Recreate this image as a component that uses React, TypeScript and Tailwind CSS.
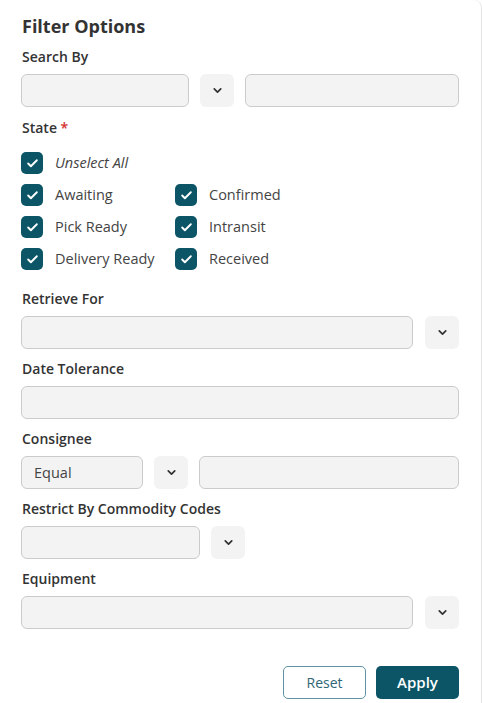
import React, { useState } from 'react';
import { ChevronDown, Check } from 'lucide-react';

const STATES = [
  { id: 'awaiting', label: 'Awaiting' },
  { id: 'confirmed', label: 'Confirmed' },
  { id: 'pickReady', label: 'Pick Ready' },
  { id: 'intransit', label: 'Intransit' },
  { id: 'deliveryReady', label: 'Delivery Ready' },
  { id: 'received', label: 'Received' },
];

const inputCls =
  'h-[33px] rounded-[6px] border border-[#cbcbcb] bg-[#f3f3f3] px-3 text-[14.5px] text-[#444] outline-none';

const DropBtn = () => (
  <button className="flex h-[33px] w-[34px] shrink-0 items-center justify-center rounded-[6px] bg-[#f3f3f3] text-[#333]">
    <ChevronDown size={13} strokeWidth={3.2} />
  </button>
);

const Label = ({ children }: { children: React.ReactNode }) => (
  <div className="mb-[7px] h-[20px] pl-[1px] text-[14px] font-semibold leading-[20px] text-[#333]">{children}</div>
);

const Box = ({ checked, onClick }: { checked: boolean; onClick: () => void }) => (
  <button
    onClick={onClick}
    className={`flex h-[22px] w-[22px] shrink-0 items-center justify-center rounded-[5px] ${
      checked ? 'bg-[#0b5567]' : 'border border-[#999] bg-white'
    }`}
  >
    {checked && <Check size={13} strokeWidth={3.5} className="text-white" />}
  </button>
);

export default function App() {
  const [sel, setSel] = useState<Record<string, boolean>>(
    Object.fromEntries(STATES.map((s) => [s.id, true]))
  );
  const all = STATES.every((s) => sel[s.id]);

  const toggleAll = () => {
    const v = !all;
    setSel(Object.fromEntries(STATES.map((s) => [s.id, v])));
  };

  return (
    <div
      className="flex min-h-[703px] w-[482px] flex-col rounded-tr-[8px] border-r border-[#e3e3e3] bg-white pl-[21px] pr-[22px] pt-[13px]"
      style={{ fontFamily: '"Open Sans", "Noto Sans", sans-serif' }}
    >
      <h2 className="mb-[8px] pl-[1px] text-[18px] font-bold leading-[26px] text-[#333]">Filter Options</h2>

      <div>
        <Label>Search By</Label>
        <div className="flex items-center gap-[11px]">
          <input className={`${inputCls} w-[168px]`} />
          <DropBtn />
          <input className={`${inputCls} flex-1`} />
        </div>
      </div>

      <div className="mt-[11px] flex flex-col">
        <Label>
          State <span className="text-[#d32f2f]">*</span>
        </Label>
        <div className="mt-[7px] flex items-center gap-[12px]">
          <Box checked={all} onClick={toggleAll} />
          <span className="text-[14.5px] italic text-[#444]">Unselect All</span>
        </div>
        <div className="mt-[10px] grid grid-cols-[154px_1fr] gap-y-[10px]">
          {STATES.map((s) => (
            <div key={s.id} className="flex items-center gap-[12px]">
              <Box checked={sel[s.id]} onClick={() => setSel({ ...sel, [s.id]: !sel[s.id] })} />
              <span className="whitespace-nowrap text-[14.5px] text-[#444]">{s.label}</span>
            </div>
          ))}
        </div>
      </div>

      <div className="mt-[19px]">
        <Label>Retrieve For</Label>
        <div className="flex items-center gap-[12px]">
          <input className={`${inputCls} flex-1`} />
          <DropBtn />
        </div>
      </div>

      <div className="mt-[10px]">
        <Label>Date Tolerance</Label>
        <input className={`${inputCls} w-full`} />
      </div>

      <div className="mt-[10px]">
        <Label>Consignee</Label>
        <div className="flex items-center gap-[11px]">
          <input className={`${inputCls} w-[122px]`} defaultValue="Equal" readOnly />
          <DropBtn />
          <input className={`${inputCls} flex-1`} />
        </div>
      </div>

      <div className="mt-[10px]">
        <Label>Restrict By Commodity Codes</Label>
        <div className="flex items-center gap-[11px]">
          <input className={`${inputCls} w-[179px]`} />
          <DropBtn />
        </div>
      </div>

      <div className="mt-[10px]">
        <Label>Equipment</Label>
        <div className="flex items-center gap-[12px]">
          <input className={`${inputCls} flex-1`} />
          <DropBtn />
        </div>
      </div>

      <div className="mt-[37px] flex justify-end gap-[10px]">
        <button className="h-[33px] w-[83px] rounded-[5px] border border-[#5e93a1] bg-white text-[14px] text-[#2f6677]">
          Reset
        </button>
        <button className="h-[33px] w-[83px] rounded-[5px] bg-[#0b5567] text-[15px] font-semibold text-white">
          Apply
        </button>
      </div>
    </div>
  );
}
